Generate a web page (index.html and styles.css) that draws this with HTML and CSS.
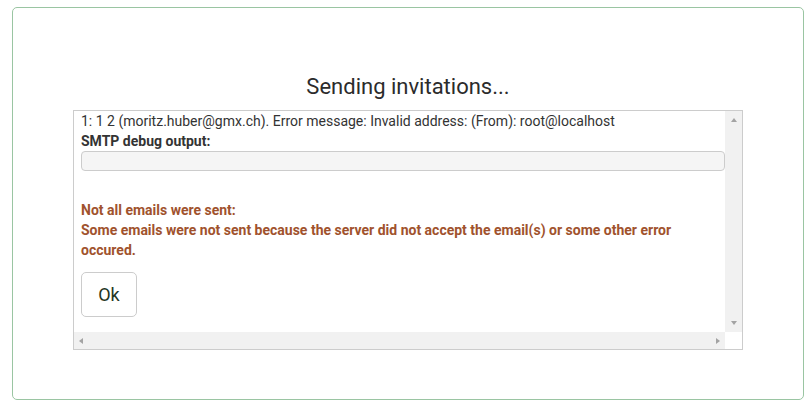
FILE: index.html
```html
<!DOCTYPE html>
<html lang="en">
<head>
    <meta charset="UTF-8">
    <meta name="viewport" content="width=device-width, initial-scale=1.0">
    <title>Sending invitations</title>
    <link rel="stylesheet" href="styles.css">
</head>
<body>
    <div class="card">
        <h2 class="title">Sending invitations...</h2>
        <div class="log">
            <div class="log-content">
                <div class="log-line">1: 1 2 (moritz.huber@gmx.ch). Error message: Invalid address: (From): root@localhost</div>
                <div class="log-label">SMTP debug output:</div>
                <pre class="debug"></pre>
                <p class="warning">Not all emails were sent:<br>Some emails were not sent because the server did not accept the email(s) or some other error occured.</p>
                <button class="ok-btn">Ok</button>
            </div>
            <!-- fake scrollbars, always shown like the old browser ones -->
            <div class="vbar">
                <span class="arrow arrow-up"></span>
                <span class="arrow arrow-down"></span>
            </div>
            <div class="hbar">
                <span class="arrow arrow-left"></span>
                <span class="arrow arrow-right"></span>
            </div>
            <div class="corner"></div>
        </div>
    </div>
</body>
</html>
```

FILE: styles.css
```css
body {
    margin: 0;
    font-family: Roboto, "Noto Sans", sans-serif;
    color: #333;
    background-color: #fff;
}
.card {
    box-sizing: border-box;
    width: 792px;
    height: 393px;
    margin: 7px 0 0 12px;
    padding-top: 66px;
    border: 1px solid #9ac5a2;
    border-radius: 5px;
}
.title {
    margin: 0 0 10px;
    font-size: 22px;
    font-weight: 400;
    line-height: 26px;
    text-align: center;
    color: #2b2b2b;
}
.log {
    box-sizing: border-box;
    display: grid;
    grid-template-columns: 1fr 17px;
    grid-template-rows: 1fr 17px;
    width: 670px;
    height: 240px;
    margin: 0 auto;
    border: 1px solid #ccc;
    font-size: 14px;
    line-height: 20px;
}
.log-content {
    overflow: hidden;
    padding: 0 0 0 7px;
}
.log-label {
    font-weight: bold;
}
.debug {
    box-sizing: border-box;
    height: 20px;
    margin: 0 0 29px;
    border: 1px solid #ccc;
    border-radius: 4px;
    background-color: #f5f5f5;
}
.warning {
    margin: 0;
    color: #a0522d;
    font-weight: bold;
}
.ok-btn {
    display: block;
    width: 56px;
    height: 45px;
    margin-top: 12px;
    padding: 0;
    border: 1px solid #ccc;
    border-radius: 5px;
    background-color: #fff;
    font-family: Roboto, "Noto Sans", sans-serif;
    font-size: 18px;
    color: #233623;
}

/* scrollbars */
.vbar,
.hbar {
    display: flex;
    justify-content: space-between;
    align-items: center;
    background-color: #f1f1f1;
}
.vbar {
    flex-direction: column;
    padding: 7px 0;
}
.hbar {
    padding: 0 5px;
}
.corner {
    background-color: #fff;
}
.arrow {
    width: 0;
    height: 0;
    border: 0 solid transparent;
}
.arrow-up {
    border-width: 0 3.5px 4px;
    border-bottom-color: #a3a3a3;
}
.arrow-down {
    border-width: 4px 3.5px 0;
    border-top-color: #a3a3a3;
}
.arrow-left {
    border-width: 3.5px 4px 3.5px 0;
    border-right-color: #a3a3a3;
}
.arrow-right {
    border-width: 3.5px 0 3.5px 4px;
    border-left-color: #a3a3a3;
}
```
